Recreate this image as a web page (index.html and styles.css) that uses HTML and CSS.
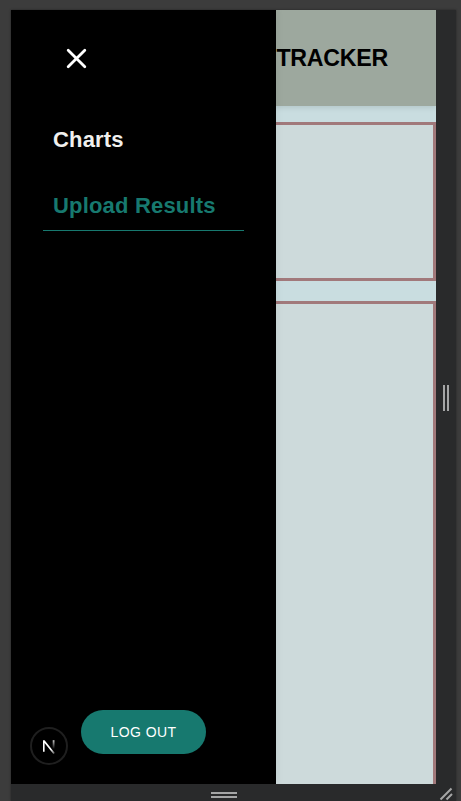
FILE: index.html
```html
<!DOCTYPE html>
<html lang="en">
<head>
<meta charset="utf-8">
<title>Tracker</title>
<link rel="stylesheet" href="styles.css">
</head>
<body>
<div class="frame">
  <div class="device">
    <header class="header"><h1 class="title">TRACKER</h1></header>
    <main class="content">
      <section class="panel panel-short"></section>
      <section class="panel panel-tall"></section>
    </main>
    <aside class="drawer">
      <button class="close" aria-label="Close">
        <svg width="22" height="22" viewBox="0 0 22 22"><path d="M2.2 2.2 18.8 18.8M18.8 2.2 2.2 18.8" stroke="#fff" stroke-width="2.8" stroke-linecap="round"/></svg>
      </button>
      <nav class="nav">
        <a class="link">Charts</a>
        <a class="link link-active">Upload Results</a>
      </nav>
      <button class="logout">LOG OUT</button>
      <div class="badge">
        <svg width="38" height="38" viewBox="0 0 38 38">
          <defs>
            <linearGradient id="diag" gradientUnits="userSpaceOnUse" x1="18" y1="18" x2="24.5" y2="26"><stop offset=".5" stop-color="#fff"/><stop offset="1" stop-color="#fff" stop-opacity=".4"/></linearGradient>
            <linearGradient id="stem" gradientUnits="userSpaceOnUse" x1="0" y1="13" x2="0" y2="22"><stop offset="0" stop-color="#fff" stop-opacity=".8"/><stop offset="1" stop-color="#fff" stop-opacity="0"/></linearGradient>
          </defs>
          <circle cx="19" cy="19" r="18" fill="#000" stroke="#1f1f1f" stroke-width="2"/>
          <path d="M13 13.2h1.6L24.8 26l-1.4 1L14.6 16v8.8H13z" fill="url(#diag)"/>
          <path d="M23.6 13.2V22" stroke="url(#stem)" stroke-width="1.8"/>
        </svg>
      </div>
    </aside>
  </div>
  <div class="handle handle-side"><i class="grip-side"></i></div>
  <div class="handle handle-bottom"><i class="grip-bottom"></i></div>
  <div class="handle corner">
    <svg width="20" height="17" viewBox="0 0 20 17"><path d="M4.5 15.5 15.5 4.5M10.5 15.5 16 10" stroke="#a5a6a6" stroke-width="2"/></svg>
  </div>
</div>
</body>
</html>
```
FILE: styles.css
```css
* { box-sizing: border-box; }
body {
  margin: 0;
  height: 801px;
  overflow: hidden;
  padding: 10px 5px 0 11px;
  background: #3c3c3c;
  font-family: "Liberation Sans", Arial, sans-serif;
}
button { border: 0; padding: 0; font: inherit; }
svg { display: block; }
.frame {
  display: grid;
  grid-template-columns: 425px 20px;
  grid-template-rows: 774px 17px;
  box-shadow: 0 0 2px #222;
}
.device {
  position: relative;
  overflow: hidden;
  background: #c9dde0;
}
.header {
  height: 96px;
  display: flex;
  align-items: center;
  justify-content: flex-end;
  padding-right: 48px;
  background: #9da89e;
  box-shadow: 0 2px 5px rgba(0, 0, 0, .1);
}
.title {
  margin: 0;
  font-size: 23.2px;
  line-height: 28px;
  letter-spacing: -.25px;
  color: #000;
}
.content {
  display: flex;
  flex-direction: column;
  gap: 20px;
  padding-top: 16px;
}
.panel {
  border: 3px solid #a1797b;
  background: #cddadb;
}
.panel-short { height: 159px; }
.panel-tall { height: 520px; }
.drawer {
  position: absolute;
  inset: 0 auto 0 0;
  width: 265px;
  display: flex;
  flex-direction: column;
  background: #000;
  box-shadow: 0 0 8px rgba(0, 0, 0, .08);
}
.close {
  width: 22px;
  height: 22px;
  margin: 38px 0 0 55px;
  background: none;
}
.nav {
  display: flex;
  flex-direction: column;
  gap: 16px;
  margin: 45px 32px 0;
}
.link {
  height: 50px;
  padding: 0 10px;
  border-bottom: 1px solid transparent;
  font-size: 22px;
  font-weight: 700;
  line-height: 50px;
  letter-spacing: .18px;
  white-space: nowrap;
  color: #f0f0ee;
}
.link-active {
  color: #17796f;
  border-bottom-color: #17796f;
}
.logout {
  width: 125px;
  height: 44px;
  margin: auto 0 30px 70px;
  border-radius: 22px;
  background: #17796f;
  color: #fff;
  font-size: 14px;
  letter-spacing: .4px;
}
.badge {
  position: absolute;
  left: 19px;
  bottom: 19px;
}
.handle {
  display: flex;
  align-items: center;
  justify-content: center;
  background: #292a2b;
}
.grip-side {
  width: 6px;
  height: 26px;
  margin-top: 2px;
  border: solid #a5a6a6;
  border-width: 0 2px;
}
.grip-bottom {
  width: 26px;
  height: 6px;
  margin-top: 5px;
  border: solid #a5a6a6;
  border-width: 2px 0;
}
```
